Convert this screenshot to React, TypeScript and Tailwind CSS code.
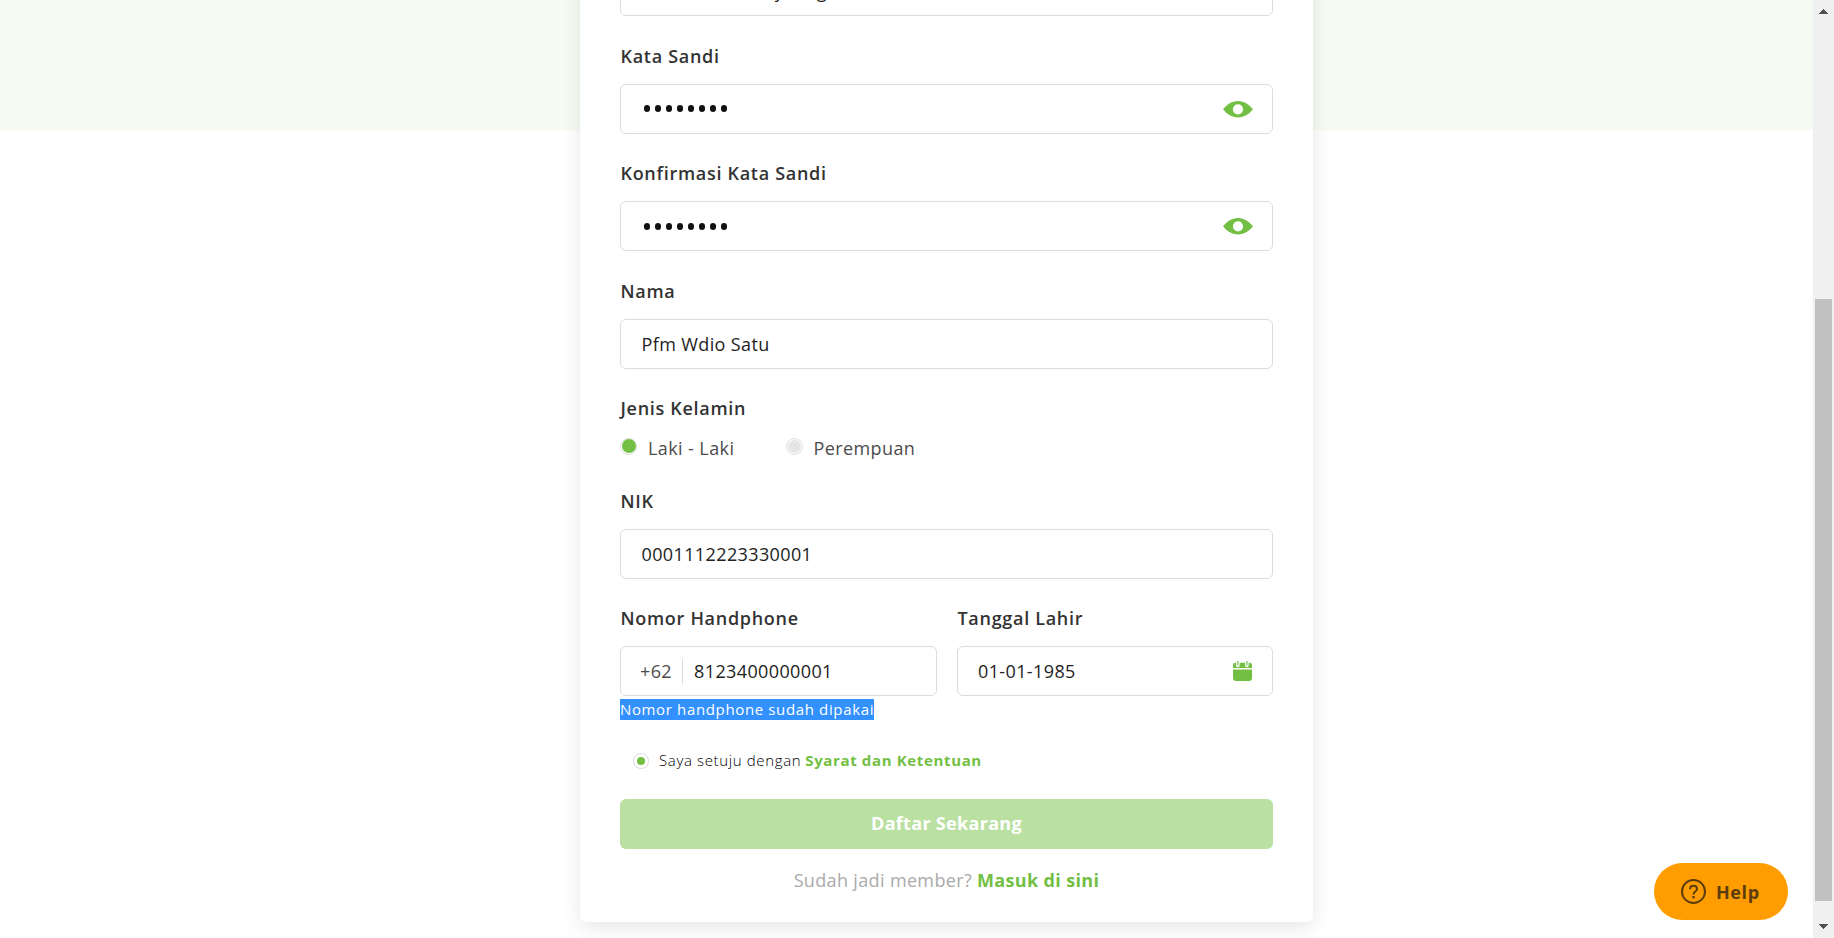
import React from "react";

const label = "h-[24px] leading-[24px] text-[18px] font-semibold pl-[0.5px] tracking-[0.7px] text-[#333333] whitespace-nowrap";
const box = "flex h-[50px] items-center rounded-[6px] border border-[#dcdcdc] bg-white px-[20px] text-[18px] tracking-[0.38px] text-[#222222] whitespace-nowrap";

function Eye() {
  return (
    <svg width="30" height="17" viewBox="0 0 30 17" className="-mr-px ml-auto" fill="#72bf44">
      <path fillRule="evenodd" d="M0 8.3C3.5 4 8.5 0 15 0s11.500 4 15 8.300C26.500 12.700 21.500 16.500 15 16.500S3.500 12.700 0 8.300ZM15 3.200a5.100 5.100 0 1 0 0 10.200a5.100 5.100 0 0 0 0-10.200Z" />
    </svg>
  );
}

function Dots({ className = "" }: { className?: string }) {
  return (
    <span className={`flex gap-[5px] pl-[2.5px] ${className}`}>
      {Array.from({ length: 8 }, (_, i) => (
        <span key={i} className="h-[7px] w-[6px] rounded-full bg-[#111111]" />
      ))}
    </span>
  );
}

function Calendar() {
  return (
    <svg width="19" height="20" viewBox="0 0 19 20" className="ml-auto" fill="#72bf44">
      <path d="M2.500 1.800h14a2.500 2.500 0 0 1 2.500 2.500V7H0V4.300a2.500 2.500 0 0 1 2.500-2.500ZM0 8.600h19v9a2.400 2.400 0 0 1-2.400 2.400H2.400A2.400 2.400 0 0 1 0 17.600Z" />
      <path d="M4.900 0v4.500M13.900 0v4.500" stroke="#fff" strokeWidth="3.600" strokeLinecap="round" />
      <path d="M4.900 0v4.500M13.900 0v4.500" stroke="#72bf44" strokeWidth="1.200" />
    </svg>
  );
}

export default function App() {
  return (
    <div className="relative flex h-[938px] w-[1834px] overflow-hidden bg-white font-['Open_Sans',sans-serif]">
      <div className="flex h-full w-[1813px] bg-[linear-gradient(#f6fcf1_130px,#ffffff_130px)] pl-[580px]">
        <main className="-mt-[34px] flex h-[956px] w-[733px] flex-col rounded-[6px] bg-white px-[40px] shadow-[0_5px_20px_rgba(0,0,0,0.1)]">
          <div className={box}>user.wdio@daily.blog.com</div>

          <div className={`${label} mt-[28px]`}>Kata Sandi</div>
          <div className={`${box} mt-[16px]`}><Dots className="-mt-[2px]" /><Eye /></div>

          <div className={`${label} mt-[27px]`}>Konfirmasi Kata Sandi</div>
          <div className={`${box} mt-[16px]`}><Dots /><Eye /></div>

          <div className={`${label} mt-[28px]`}>Nama</div>
          <div className={`${box} mt-[16px]`}><span className="pl-[0.5px]">Pfm Wdio Satu</span></div>

          <div className={`${label} mt-[27px]`}>Jenis Kelamin</div>
          <div className="mt-[16px] flex h-[25px] items-center text-[18px] tracking-[0.4px] text-[#4c4c4c]">
            <span className="-mt-[5px] flex size-[17px] items-center justify-center rounded-full border border-[#dcdcdc]">
              <span className="size-[14px] shrink-0 rounded-full bg-[#72bf44]" />
            </span>
            <span className="ml-[11px] w-[138px]">Laki - Laki</span>
            <span className="-mt-[5px] flex size-[17px] items-center justify-center rounded-full border border-[#dcdcdc]">
              <span className="size-[13px] rounded-full bg-[#e5e5e5]" />
            </span>
            <span className="ml-[10.5px]">Perempuan</span>
          </div>

          <div className={`${label} mt-[28px]`}>NIK</div>
          <div className={`${box} mt-[16px]`}><span className="pl-[0.5px]">0001112223330001</span></div>

          <div className="mt-[27px] grid grid-cols-[317px_316px] gap-x-[20px]">
            <div>
              <div className={label}>Nomor Handphone</div>
              <div className={`${box} mt-[16px]`}>
                <span className="-ml-px text-[#4c4c4c]">+62</span>
                <span className="ml-[10px] mr-[11px] h-[25px] w-px bg-[#dcdcdc]" />
                8123400000001
              </div>
              <div className="mt-[3px] h-[21px] w-[254px] bg-[#3390ff] text-[15px] leading-[21px] tracking-[0.64px] text-white whitespace-nowrap">
                Nomor handphone sudah dipakai
              </div>
            </div>
            <div>
              <div className={label}>Tanggal Lahir</div>
              <div className={`${box} mt-[16px]`}>01-01-1985<Calendar /></div>
            </div>
          </div>

          <div className="mt-[29px] flex h-[22px] items-center pl-[13px] text-[15px] tracking-[0.64px] whitespace-nowrap">
            <span className="mt-px flex size-[16px] items-center justify-center rounded-full border border-[#dcdcdc]">
              <span className="size-[8px] rounded-full bg-[#72bf44]" />
            </span>
            <span className="ml-[10px] font-light text-black">Saya setuju dengan</span>
            <span className="ml-[4px] font-bold text-[#72bf44]">Syarat dan Ketentuan</span>
          </div>

          <button className="mt-[28px] h-[50px] rounded-[6px] bg-[#bae0a2] pb-[2px] text-[18px] font-bold tracking-[0.31px] text-white">
            Daftar Sekarang
          </button>
          <div className="mt-[19px] flex h-[25px] items-center justify-center gap-[5px] text-[18px] tracking-[0.35px] whitespace-nowrap">
            <span className="text-[#aaaaaa]">Sudah jadi member?</span>
            <span className="font-bold text-[#72bf44]">Masuk di sini</span>
          </div>
        </main>
      </div>

      <aside className="flex h-full w-[21px] flex-col items-center bg-[#f0f0f0]">
        <svg width="9" height="5" viewBox="0 0 9 5" className="mt-[9px]" fill="#505050" shapeRendering="crispEdges"><path d="M4.500 0L9 5H0Z" /></svg>
        <div className="mt-[285px] h-[602px] w-[17px] bg-[#c1c1c1]" />
        <svg width="9" height="5" viewBox="0 0 9 5" className="mt-[23px]" fill="#505050" shapeRendering="crispEdges"><path d="M4.500 5L9 0H0Z" /></svg>
      </aside>

      <button className="absolute left-[1654px] top-[863px] flex h-[57px] w-[134px] items-center rounded-full bg-[#ff9d00] pl-[27px] text-[18px] font-bold text-[#5c3c0c]">
        <svg width="25" height="25" viewBox="0 0 25 25" fill="none" stroke="#5c3c0c" strokeWidth="2">
          <circle cx="12.500" cy="12.500" r="11.500" />
          <path d="M9 10.200C9 8 10.500 6.800 12.500 6.800s3.500 1.200 3.500 3.100c0 2.700-3.500 2.700-3.500 5.600" />
          <path d="M12.500 17v2.400" strokeWidth="2.300" />
        </svg>
        <span className="ml-[10px] pt-[2px] tracking-[0.600px]">Help</span>
      </button>
    </div>
  );
}
